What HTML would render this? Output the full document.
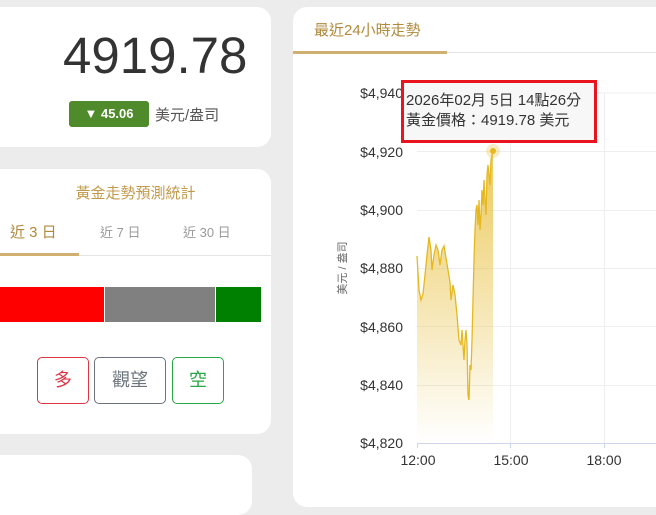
<!DOCTYPE html>
<html><head><meta charset="utf-8"><style>
*{margin:0;padding:0;box-sizing:border-box}
body{width:656px;height:486px;background:#ececec;position:relative;overflow:hidden;font-family:"Liberation Sans","Noto Sans CJK TC",sans-serif}
.card{position:absolute;background:#fff;border-radius:14px}
.abs{position:absolute}
</style></head><body>
<div class="card" style="left:-20px;top:7px;width:291px;height:140px"></div>
<div class="abs" style="left:63px;top:26px;font-size:51px;color:#333;letter-spacing:0">4919.78</div>
<div class="abs" style="left:69px;top:101px;width:80px;height:26px;background:#4f8a2b;border-radius:3px;color:#fff;font-weight:bold;font-size:13px;line-height:26px;text-align:center">▼ 45.06</div>
<div class="abs" style="left:155px;top:104px;font-size:15px;color:#555">美元/盎司</div>

<div class="card" style="left:-20px;top:169px;width:291px;height:265px"></div>
<div class="abs" style="left:0;width:271px;top:182px;text-align:center;font-size:15px;color:#c19a4c">黃金走勢預測統計</div>
<div class="abs" style="left:10px;top:221px;font-size:15px;color:#b08a3c">近 3 日</div>
<div class="abs" style="left:100px;top:222px;font-size:13px;color:#999">近 7 日</div>
<div class="abs" style="left:183px;top:222px;font-size:13px;color:#999">近 30 日</div>
<div class="abs" style="left:0;top:255px;width:271px;height:1px;background:#e4e4e4"></div>
<div class="abs" style="left:0;top:253px;width:79px;height:3px;background:#d0b070"></div>
<div class="abs" style="left:0;top:287px;width:104px;height:35px;background:#f00"></div>
<div class="abs" style="left:105px;top:287px;width:110px;height:35px;background:#808080"></div>
<div class="abs" style="left:216px;top:287px;width:45px;height:35px;background:#008000"></div>
<div class="abs" style="left:37px;top:357px;width:52px;height:47px;border:1px solid #dc3545;border-radius:5px;color:#dc3545;font-size:18px;line-height:45px;text-align:center">多</div>
<div class="abs" style="left:94px;top:357px;width:72px;height:47px;border:1px solid #6c757d;border-radius:5px;color:#6c757d;font-size:18px;line-height:45px;text-align:center">觀望</div>
<div class="abs" style="left:172px;top:357px;width:52px;height:47px;border:1px solid #28a745;border-radius:5px;color:#28a745;font-size:18px;line-height:45px;text-align:center">空</div>

<div class="card" style="left:-20px;top:455px;width:272px;height:60px"></div>

<div class="card" style="left:293px;top:7px;width:400px;height:500px"></div>
<div class="abs" style="left:314px;top:19px;font-size:15px;color:#b08a3c">最近24小時走勢</div>
<div class="abs" style="left:293px;top:52px;width:363px;height:1px;background:#e4e4e4"></div>
<div class="abs" style="left:293px;top:51px;width:154px;height:3px;background:#d0b070"></div>

<svg class="abs" style="left:0;top:0" width="656" height="486">
<defs><linearGradient id="g" x1="0" y1="0" x2="0" y2="1"><stop offset="0" stop-color="#e8c040" stop-opacity=".85"/><stop offset="1" stop-color="#e8c040" stop-opacity="0"/></linearGradient></defs>
<g stroke="#eeeeee" stroke-width="1">
<line x1="417" y1="151.5" x2="656" y2="151.5"/><line x1="417" y1="210.5" x2="656" y2="210.5"/><line x1="417" y1="268.5" x2="656" y2="268.5"/><line x1="417" y1="326.5" x2="656" y2="326.5"/><line x1="417" y1="385.5" x2="656" y2="385.5"/>
<line x1="510.5" y1="93" x2="510.5" y2="443"/><line x1="604.5" y1="93" x2="604.5" y2="443"/><line x1="417" y1="93" x2="656" y2="93"/>
</g>
<line x1="417" y1="443.5" x2="656" y2="443.5" stroke="#ccd6eb"/>
<line x1="417.5" y1="443" x2="417.5" y2="448" stroke="#ccd6eb"/><line x1="510.5" y1="443" x2="510.5" y2="448" stroke="#ccd6eb"/><line x1="604.5" y1="443" x2="604.5" y2="448" stroke="#ccd6eb"/>
<path d="M417,256 L419,290 421,300 423,294 425,275 427,255 429,237 431,250 432,270 434,255 436,245 438,250 440,265 442,250 444,246 446,258 448,270 450,282 451,300 453,285 455,295 457,315 459,340 461,345 462,330 464,360 465,340 466,330 467,345 468,395 469,400 470,365 471,370 472,340 473,300 474,260 475,230 476,210 477,205 478,225 479,200 480,230 481,215 482,190 483,205 484,180 485,200 486,215 487,175 488,165 490,185 491,160 492,155 493,151 L493,443 L417,443 Z" fill="url(#g)"/>
<path d="M417,256 L419,290 421,300 423,294 425,275 427,255 429,237 431,250 432,270 434,255 436,245 438,250 440,265 442,250 444,246 446,258 448,270 450,282 451,300 453,285 455,295 457,315 459,340 461,345 462,330 464,360 465,340 466,330 467,345 468,395 469,400 470,365 471,370 472,340 473,300 474,260 475,230 476,210 477,205 478,225 479,200 480,230 481,215 482,190 483,205 484,180 485,200 486,215 487,175 488,165 490,185 491,160 492,155 493,151" fill="none" stroke="#e6b820" stroke-width="1.3"/>
<circle cx="493" cy="151" r="7" fill="#e8c040" opacity=".3"/><circle cx="493" cy="151" r="3" fill="#e6b820"/>
<g font-family="Liberation Sans" font-size="14" fill="#333" text-anchor="end">
<text x="403" y="98">$4,940</text><text x="403" y="157">$4,920</text><text x="403" y="215">$4,900</text><text x="403" y="273">$4,880</text><text x="403" y="332">$4,860</text><text x="403" y="390">$4,840</text><text x="403" y="448">$4,820</text>
</g>
<g font-family="Liberation Sans" font-size="14" fill="#333" text-anchor="middle">
<text x="418" y="465">12:00</text><text x="511" y="465">15:00</text><text x="604" y="465">18:00</text>
</g>
<text transform="translate(346,268) rotate(-90)" text-anchor="middle" font-family="Liberation Sans,Noto Sans CJK TC" font-size="11" fill="#666">美元 / 盎司</text>
</svg>
<div class="abs" style="left:401px;top:80px;width:196px;height:63px;border:3px solid #e8141e;background:#f7f7f7"></div>
<div class="abs" style="left:406px;top:91px;font-size:15px;color:#333;line-height:20px;white-space:nowrap">2026年02月 5日 14點26分<br>黃金價格：4919.78 美元</div>
</body></html>
